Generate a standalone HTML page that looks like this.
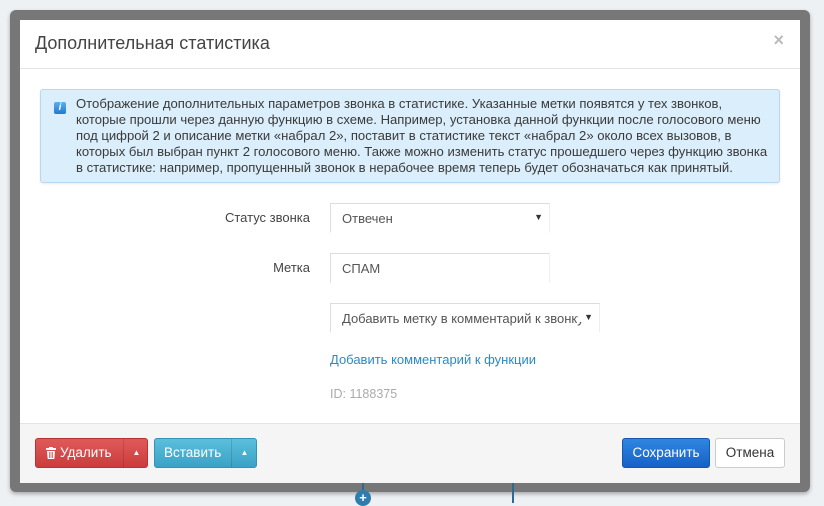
<!DOCTYPE html>
<html><head><meta charset="utf-8"><style>
*{box-sizing:border-box}
body{margin:0;width:824px;height:503px;background:#eef1f4;font-family:"Liberation Sans","Noto Sans CJK SC",sans-serif;position:relative;overflow:hidden;color:#444}
.frame{position:absolute;left:10px;top:10px;width:800px;height:482px;background:#777;border-radius:6px;box-shadow:0 2px 4px rgba(0,0,0,.3)}
.modal{position:absolute;left:20px;top:20px;width:780px;height:463px;background:#fff}
.title{position:absolute;left:15px;top:13px;font-size:18px;color:#444}
.close{position:absolute;right:16px;top:10px;font-size:18px;color:#bbb;font-weight:bold}
.hline{position:absolute;left:0;right:0;top:48px;border-top:1px solid #e5e5e5}
.alert{position:absolute;left:20px;top:69px;width:740px;height:94px;background:#dbeefb;border:1px solid #b9d7ee;border-radius:3px;box-shadow:0 1px 2px rgba(0,0,0,.08)}
.alert .ic{position:absolute;left:13px;top:12px;width:12px;height:12px;background:linear-gradient(#5ab0ef,#1f7ad0);border-radius:2px;color:#fff;font-size:10px;font-style:italic;font-weight:bold;text-align:center;line-height:12px}
.alert .t{position:absolute;left:35px;top:6px;font-size:13.1px;line-height:16px;color:#3a3a3a;white-space:nowrap}
.lbl{position:absolute;right:490px;font-size:13px;color:#444}
.fld{position:absolute;left:310px;height:30px;border:1px solid #ddd;border-bottom-color:#fff;border-right-color:#eee;font-size:13px;color:#555;padding:7px 11px;white-space:nowrap;overflow:hidden}
.fld .ar{position:absolute;right:6px;top:8px;font-size:9px;color:#333}
.link{position:absolute;left:310px;top:332px;font-size:13px;color:#2a8ac7}
.id{position:absolute;left:310px;top:367px;font-size:12.5px;color:#aaa}
.footer{position:absolute;left:0;right:0;top:403px;bottom:0;background:#f5f5f5;border-top:1px solid #e3e3e3}
.btn{position:absolute;top:14px;height:30px;border-radius:3px;color:#fff;font-size:13.5px;line-height:28px}
.btn .car{position:absolute;top:0;bottom:0;width:26px;border-left:1px solid rgba(0,0,0,.12);text-align:center;font-size:8px}
</style></head><body>
<div class="frame"></div>
<div class="modal">
<div class="title">Дополнительная статистика</div>
<div class="close">×</div>
<div class="hline"></div>
<div class="alert"><div class="ic">i</div><div class="t">Отображение дополнительных параметров звонка в статистике. Указанные метки появятся у тех звонков,<br>которые прошли через данную функцию в схеме. Например, установка данной функции после голосового меню<br>под цифрой 2 и описание метки «набрал 2», поставит в статистике текст «набрал 2» около всех вызовов, в<br>которых был выбран пункт 2 голосового меню. Также можно изменить статус прошедшего через функцию звонка<br>в статистике: например, пропущенный звонок в нерабочее время теперь будет обозначаться как принятый.</div></div>
<div class="lbl" style="top:190px">Статус звонка</div>
<div class="fld" style="top:183px;width:220px">Отвечен<span class="ar">▼</span></div>
<div class="lbl" style="top:240px">Метка</div>
<div class="fld" style="top:233px;width:220px">СПАМ</div>
<div class="fld" style="top:283px;width:270px;padding-right:30px">Добавить метку в комментарий к звонку<span class="ar" style="background:#fff;padding-left:6px">▼</span></div>
<div class="link">Добавить комментарий к функции</div>
<div class="id">ID: 1188375</div>
<div class="footer">
<div class="btn" style="left:15px;width:113px;background:linear-gradient(#e05a5a,#cb3c3c);border:1px solid #b83434"><svg style="position:absolute;left:10px;top:8px" width="10" height="12" viewBox="0 0 10 12"><rect x="0" y="1" width="10" height="2" fill="#fff"/><rect x="3" y="0" width="4" height="1.5" fill="#fff"/><path d="M1 4h8l-0.7 8h-6.6z" fill="#fff"/><path d="M3.5 5v6M5 5v6M6.5 5v6" stroke="#d04444" stroke-width="0.7"/></svg><span style="padding-left:24px">Удалить</span><span class="car" style="left:87px">▲</span></div>
<div class="btn" style="left:134px;width:103px;background:linear-gradient(#5bbfdc,#3aa2c6);border:1px solid #3493b5"><span style="padding-left:9px">Вставить</span><span class="car" style="left:76px">▲</span></div>
<div class="btn" style="left:602px;width:88px;background:linear-gradient(#2f86e0,#1661c8);border:1px solid #1456b0;text-align:center">Сохранить</div>
<div class="btn" style="left:695px;width:70px;background:#fff;border:1px solid #ccc;color:#333;text-align:center">Отмена</div>
</div>
</div>
<div style="position:absolute;left:362px;top:483px;width:2px;height:10px;background:#2b6a95"></div>
<div style="position:absolute;left:355px;top:490px;width:16px;height:16px;border-radius:50%;background:#2f7db0;color:#fff;font-size:13px;font-weight:bold;text-align:center;line-height:15px">+</div>
<div style="position:absolute;left:512px;top:483px;width:2px;height:20px;background:#2b6a95"></div>
</body></html>
